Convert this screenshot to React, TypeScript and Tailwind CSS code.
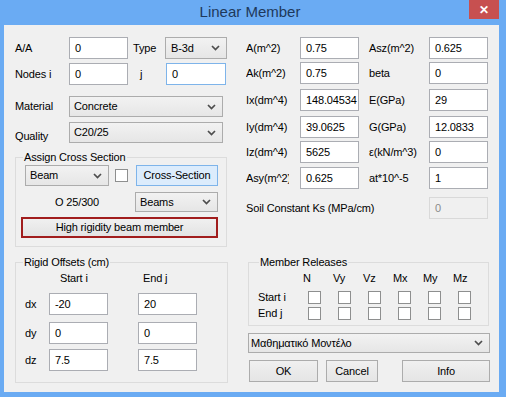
import React from "react";

const Chevron = () => (
  <svg width="9" height="6" viewBox="0 0 9 6" className="shrink-0">
    <path d="M1 1 L4.5 4.5 L8 1" fill="none" stroke="#4d4d4d" strokeWidth="1.7" />
  </svg>
);

function Input({ className = "", value, disabled, focused }: { className?: string; value: string; disabled?: boolean; focused?: boolean }) {
  const tone = disabled
    ? "bg-[#f0f0f0] border-[#d9d9d9] text-[#8a8a8a]"
    : focused
    ? "bg-white border-[#7eb4ea]"
    : "bg-white border-[#abadb3]";
  return <div className={"flex shrink-0 items-center border pl-[5px] whitespace-nowrap overflow-hidden " + tone + " " + className}>{value}</div>;
}

function Combo({ className = "", text }: { className?: string; text: string }) {
  return (
    <div className={"flex shrink-0 items-center justify-between border border-[#acacac] bg-linear-to-b from-[#f2f2f2] to-[#e6e6e6] pr-[6px] " + className}>
      <span className="whitespace-nowrap">{text}</span>
      <Chevron />
    </div>
  );
}

function Btn({ className = "", text }: { className?: string; text: string }) {
  return <div className={"flex shrink-0 items-center justify-center " + className}>{text}</div>;
}

const Check = ({ className = "" }: { className?: string }) => (
  <div className={"h-[13px] w-[13px] shrink-0 border border-[#8e8f8f] bg-white " + className} />
);

function RightRow({ l1, v1, l2, v2, className = "", clip }: { l1: string; v1: string; l2: string; v2: string; className?: string; clip?: boolean }) {
  return (
    <div className={"flex h-[22px] items-center " + className}>
      {clip ? (
        <span className="mr-[11px] w-[43px] overflow-hidden whitespace-nowrap">{l1}</span>
      ) : (
        <span className="w-[54px] overflow-hidden whitespace-nowrap">{l1}</span>
      )}
      <Input className="h-[22px] w-[59px]" value={v1} />
      <span className="ml-[10px] w-[60px] whitespace-nowrap">{l2}</span>
      <Input className="h-[22px] w-[59px]" value={v2} />
    </div>
  );
}

export default function App() {
  const heads = ["N", "Vy", "Vz", "Mx", "My", "Mz"];
  return (
    <div className="h-[397px] w-[506px] bg-[#6aabf3] font-['Liberation_Sans',Arial,'Noto_Sans',sans-serif] text-[11px] tracking-[-0.15px] text-black">
      <div className="relative flex h-[25px] items-center justify-center pr-[6px]">
        <span className="text-[15px] tracking-normal text-[#1e395b]">Linear Member</span>
        <div className="absolute right-[7px] top-0 flex h-[19px] w-[30px] items-center justify-center bg-[#c75050] text-[12px] font-bold text-white">✕</div>
      </div>
      <div className="ml-[4px] flex h-[367px] w-[495px] bg-[#f0f0f0]">
        {/* Left column */}
        <div className="flex w-[236px] shrink-0 flex-col pl-[11px] pt-[12px]">
          <div className="flex h-[22px] items-center">
            <span className="w-[54px]">A/A</span>
            <Input className="h-[22px] w-[59px]" value="0" />
            <span className="ml-[5px] w-[32px]">Type</span>
            <Combo className="h-[22px] w-[62px] pl-[5px]" text="B-3d" />
          </div>
          <div className="mt-[4px] flex h-[22px] items-center">
            <span className="w-[54px]">Nodes i</span>
            <Input className="h-[22px] w-[59px]" value="0" />
            <span className="w-[38px] pl-[12px]">j</span>
            <Input className="h-[22px] w-[60px]" value="0" focused />
          </div>
          <div className="mt-[11px] flex h-[21px] items-center">
            <span className="w-[54px]">Material</span>
            <Combo className="h-[21px] w-[154px] pl-[4px]" text="Concrete" />
          </div>
          <div className="mt-[5px] flex h-[21px] items-center">
            <span className="w-[54px] pt-[7px]">Quality</span>
            <Combo className="h-[21px] w-[154px] pl-[4px]" text="C20/25" />
          </div>
          <fieldset className="mt-[7px] h-[97px] w-[212px] border border-[#dcdcdc]">
            <legend className="ml-[7px] px-[1px] leading-[14px]">Assign Cross Section</legend>
            <div className="mt-[1px] flex items-center pl-[9px]">
              <Combo className="h-[21px] w-[84px] pl-[4px]" text="Beam" />
              <Check className="ml-[6px]" />
              <Btn className="ml-[8px] h-[21px] w-[82px] border border-[#7eb4ea] bg-[#dcecfc]" text="Cross-Section" />
            </div>
            <div className="mt-[6px] flex h-[20px] items-center">
              <span className="w-[119px] pl-[39px]">O 25/300</span>
              <Combo className="h-[20px] w-[83px] pl-[4px]" text="Beams" />
            </div>
            <div className="mt-[5px] pl-[5px]">
              <Btn className="h-[21px] w-[197px] border-2 border-[#a11d1d] bg-linear-to-b from-[#f0f0f0] to-[#e3e3e3]" text="High rigidity beam member" />
            </div>
          </fieldset>
          <fieldset className="mt-[8px] h-[128px] w-[213px] border border-[#dcdcdc]">
            <legend className="ml-[7px] px-[1px] leading-[14px]">Rigid Offsets (cm)</legend>
            <div className="mt-[1px] flex h-[16px] items-center">
              <span className="ml-[44px] w-[83px]">Start i</span>
              <span>End j</span>
            </div>
            {[
              ["dx", "-20", "20", "mt-[7px]"],
              ["dy", "0", "0", "mt-[7px]"],
              ["dz", "7.5", "7.5", "mt-[5px]"],
            ].map(([l, a, b, m]) => (
              <div key={l} className={"flex h-[22px] items-center " + m}>
                <span className="w-[33px] pl-[9px]">{l}</span>
                <Input className="h-[22px] w-[59px]" value={a} />
                <Input className="ml-[30px] h-[22px] w-[59px]" value={b} />
              </div>
            ))}
          </fieldset>
        </div>
        {/* Right column */}
        <div className="flex flex-col pl-[6px] pt-[12px]">
          <RightRow l1="A(m^2)" v1="0.75" l2="Asz(m^2)" v2="0.625" />
          <RightRow className="mt-[3px]" l1="Ak(m^2)" v1="0.75" l2="beta" v2="0" />
          <RightRow className="mt-[5px]" l1="Ix(dm^4)" v1="148.04534" l2="E(GPa)" v2="29" />
          <RightRow className="mt-[5px]" l1="Iy(dm^4)" v1="39.0625" l2="G(GPa)" v2="12.0833" />
          <RightRow className="mt-[3px]" l1="Iz(dm^4)" v1="5625" l2="ε(kN/m^3)" v2="0" />
          <RightRow className="mt-[4px]" l1="Asy(m^2)" v1="0.625" l2="at*10^-5" v2="1" clip />
          <div className="mt-[8px] flex h-[22px] items-center">
            <span className="w-[183px] whitespace-nowrap">Soil Constant Ks (MPa/cm)</span>
            <Input className="h-[22px] w-[59px]" value="0" disabled />
          </div>
          <fieldset className="ml-[2px] mt-[36px] h-[71px] w-[241px] border border-[#dcdcdc]">
            <legend className="ml-[10px] px-[1px] leading-[14px]">Member Releases</legend>
            <div className="mt-[1px] flex h-[16px] items-center pl-[54px]">
              {heads.map((h) => (
                <span key={h} className="w-[30px]">{h}</span>
              ))}
            </div>
            {["Start i", "End j"].map((r, i) => (
              <div key={r} className={"flex h-[13px] items-center " + (i === 0 ? "mt-[5px]" : "mt-[3px]")}>
                <span className="w-[59px] pl-[9px]">{r}</span>
                <div className="flex gap-[17px]">
                  {heads.map((h) => (
                    <Check key={h} />
                  ))}
                </div>
              </div>
            ))}
          </fieldset>
          <Combo className="ml-[2px] mt-[7px] h-[20px] w-[242px] pl-[2px]" text="Μαθηματικό Μοντέλο" />
          <div className="mt-[7px] flex h-[22px]">
            <Btn className="ml-[3px] h-[22px] w-[69px] border border-[#acacac] bg-linear-to-b from-[#f0f0f0] to-[#e5e5e5]" text="OK" />
            <Btn className="ml-[8px] h-[22px] w-[52px] border border-[#acacac] bg-linear-to-b from-[#f0f0f0] to-[#e5e5e5]" text="Cancel" />
            <Btn className="ml-[24px] h-[22px] w-[88px] border border-[#acacac] bg-linear-to-b from-[#f0f0f0] to-[#e5e5e5]" text="Info" />
          </div>
        </div>
      </div>
    </div>
  );
}
